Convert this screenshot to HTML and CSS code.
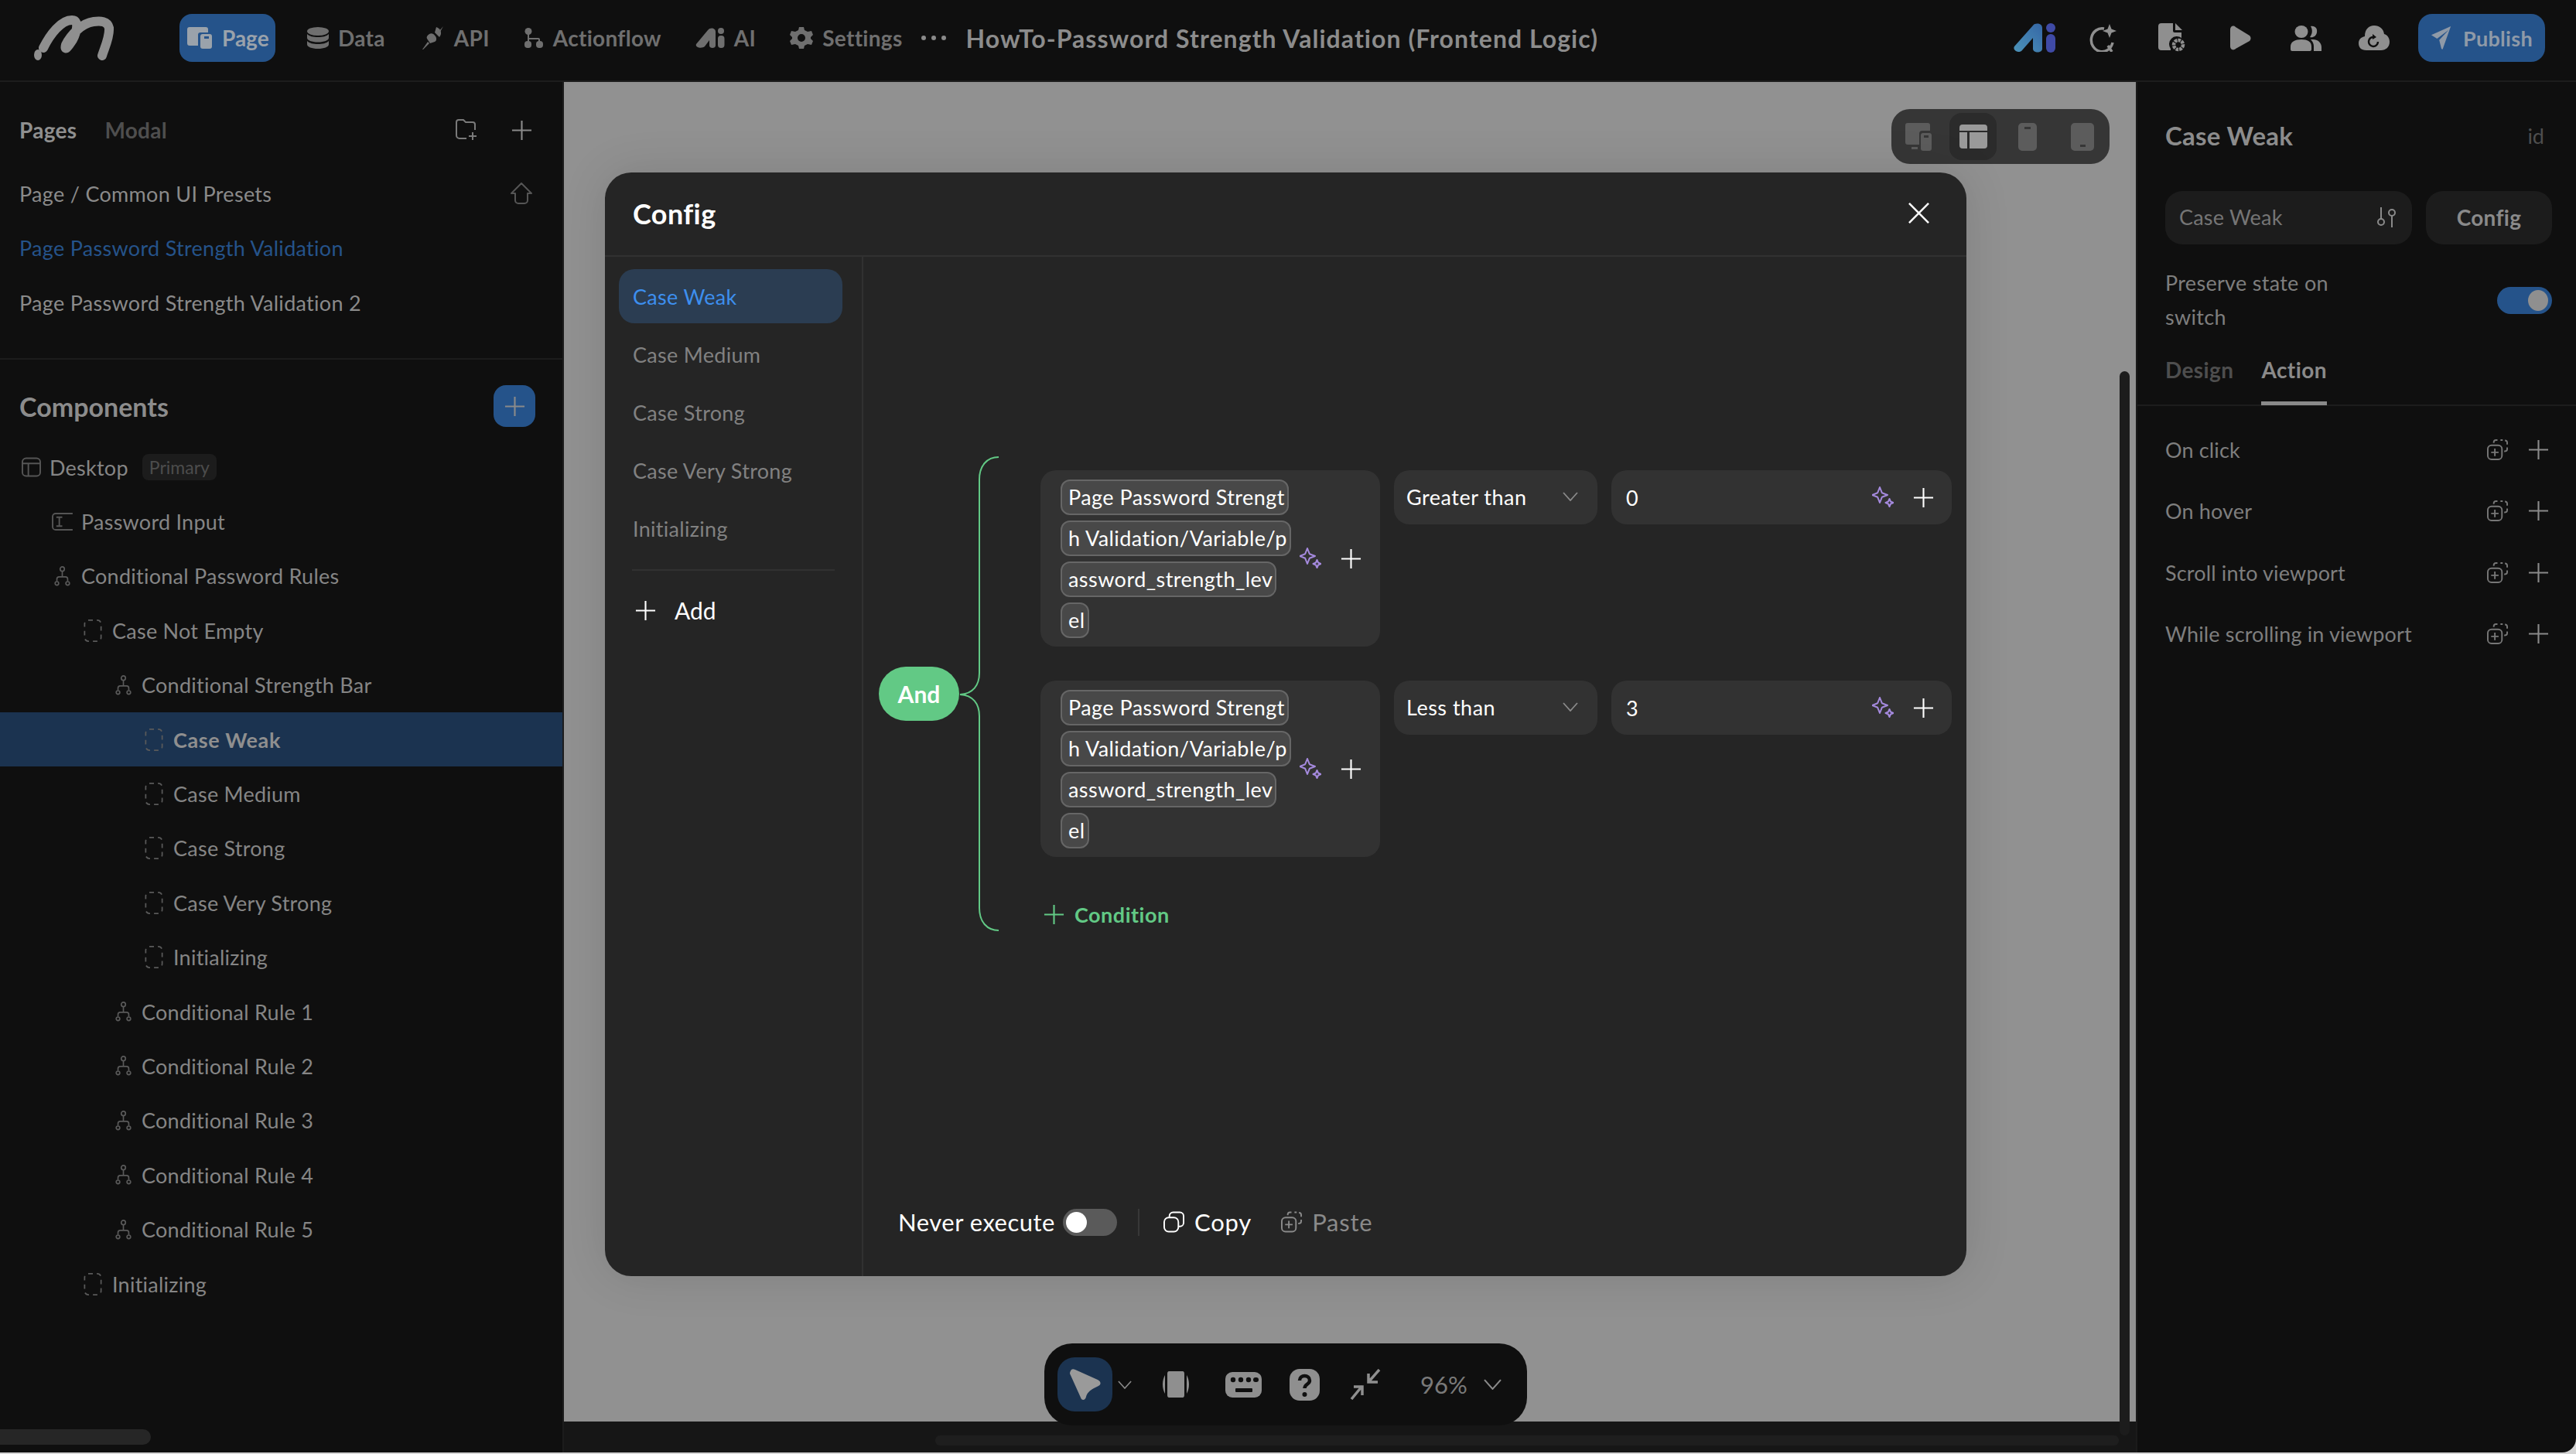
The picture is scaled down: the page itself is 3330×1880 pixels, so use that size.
FILE: index.html
```html
<!DOCTYPE html>
<html lang="en">
<head>
<meta charset="utf-8">
<title>HowTo-Password Strength Validation (Frontend Logic)</title>
<link rel="stylesheet" href="styles.css">
</head>
<body>
<svg class="sprite" xmlns="http://www.w3.org/2000/svg">
  <symbol id="plus" viewBox="0 0 28 28"><path d="M14 1v26M1 14h26" fill="none" stroke="currentColor" stroke-width="2.200"/></symbol>
  <symbol id="paste" viewBox="0 0 28 28"><g fill="none" stroke="currentColor" stroke-width="2"><path d="M9 5V4a3 3 0 0 1 3-3h2M18 1h3M24 1.500a3 3 0 0 1 3 3V7M27 11v2a3 3 0 0 1-3 3h-1"/><rect x="1" y="8" width="19" height="19" rx="5"/><path d="M10.500 12.500v10M5.500 17.500h10"/></g></symbol>
  <symbol id="dash" viewBox="0 0 24 30"><rect x="1" y="1" width="22" height="28" rx="5" fill="none" stroke="currentColor" stroke-width="1.800" stroke-dasharray="6 5.300"/></symbol>
  <symbol id="cond" viewBox="0 0 22 28"><g fill="none" stroke="currentColor" stroke-width="1.800"><circle cx="11" cy="4" r="3"/><circle cx="3.500" cy="24" r="2.500"/><circle cx="18.500" cy="24" r="2.500"/><path d="M11 7v8M3.500 21v-3a3 3 0 0 1 3-3h9a3 3 0 0 1 3 3v3"/></g></symbol>
  <symbol id="spark" viewBox="0 0 28 28"><g fill="none" stroke="#a58ade" stroke-width="2" stroke-linejoin="round"><path d="M10 1l2.800 7.200L20 11l-7.200 2.800L10 21l-2.800-7.200L0 11l7.200-2.800z"/><path d="M22.500 16l1.500 3.500 3.500 1.500-3.500 1.500-1.500 3.500-1.500-3.500-3.500-1.500 3.500-1.500z"/></g></symbol>
  <symbol id="chev" viewBox="0 0 20 12"><path d="M1 1l9 10 9-10" fill="none" stroke="currentColor" stroke-width="1.800"/></symbol>
</svg>

<div class="app">
  <header class="topbar">
    <svg class="logo" viewBox="0 0 108 58"><g fill="none" stroke="#8f8f8f" stroke-width="12" stroke-linecap="round"><path d="M13 42C22 24 36 6 50 6c12 0 4 22-2 30-4 6-8 10-6 2 6-12 20-28 36-30 9-1 18-1 20 8 1 12-6 26-9 36"/></g><ellipse cx="6" cy="51" rx="5" ry="7" fill="#8f8f8f"/></svg>
    <nav class="nav">
      <a class="nav-item nav-active"><svg viewBox="0 0 34 28" class="ni ni-g"><path d="M4 0h21a3 3 0 0 1 3 3v4H18a3 3 0 0 0-3 3v14H4a3 3 0 0 1-3-3V3a3 3 0 0 1 3-3z" fill="#9aa2ab"/><rect x="18" y="9" width="15" height="19" rx="3" fill="#9aa2ab"/><rect x="23" y="12" width="6" height="3" fill="#25538a"/></svg>Page</a>
      <a class="nav-item nav-data"><svg viewBox="0 0 28 28" class="ni ni-d"><g fill="#6f6f6f"><ellipse cx="14" cy="5.500" rx="14" ry="5.500"/><path d="M0 9c3 3 8 4 14 4s11-1 14-4v5c0 3-6 5.500-14 5.500S0 17 0 14z"/><path d="M0 18c3 3 8 4 14 4s11-1 14-4v4.500c0 3-6 5.500-14 5.500S0 25.500 0 22.500z"/></g></svg>Data</a>
      <a class="nav-item"><svg viewBox="0 0 30 30" class="ni ni-a"><g fill="#6f6f6f"><path d="M19 1c6 2 8 8 4 13l-6-6z"/><path d="M28 0l-7 8 2 1z"/><path d="M10 10c3-2 6 0 8 3s1 6-1 7l-6 2-4-6c-1-2 0-4 3-6z"/><path d="M1 30l7-10 2 2-8 8z"/></g></svg>API</a>
      <a class="nav-item"><svg viewBox="0 0 26 26" class="ni ni-f"><g fill="#6f6f6f"><circle cx="6" cy="4.500" r="4.500"/><rect x="1" y="17" width="9" height="9" rx="4"/><rect x="16" y="17" width="9" height="9" rx="4"/><path d="M5 8h2v5h12a2 2 0 0 1 2 2v3h-2v-3H7v3H5z"/></g></svg>Actionflow</a>
      <a class="nav-item"><svg viewBox="0 0 38 26" class="ni ni-i"><g fill="#6f6f6f"><path d="M1 21L16 3c3-4 10-3 10 2v18c0 4-8 4-8 0v-7l-6 8c-3 3-13 2-11-3z"/><circle cx="33" cy="4" r="4"/><rect x="29" y="10" width="8.500" height="16" rx="4"/></g></svg>AI</a>
      <a class="nav-item"><svg viewBox="0 0 30 28" class="ni ni-s"><path fill="#6f6f6f" fill-rule="evenodd" d="M12 0h6l1 4 4 2 5-1 2 5-3 3v2l3 3-2 5-5-1-4 2-1 4h-6l-1-4-4-2-5 1-2-5 3-3v-2L0 10l2-5 5 1 4-2zm3 9a5 5 0 1 0 0 10 5 5 0 0 0 0-10z"/></svg>Settings</a>
      <span class="dots"><i></i><i></i><i></i></span>
    </nav>
    <h1 class="doc-title">HowTo-Password Strength Validation (Frontend Logic)</h1>
    <div class="top-actions">
      <svg viewBox="0 0 55 38" class="ta ta-ai"><defs><linearGradient id="aig" x1="0" y1="1" x2="1" y2="0"><stop offset="0" stop-color="#4c93b8"/><stop offset="1" stop-color="#3567a6"/></linearGradient></defs><path d="M1 30L25 3c3-4 12-3 12 3v27c0 6-12 6-12 0V19L11 35c-4 5-13 0-10-5z" fill="url(#aig)"/><ellipse cx="48" cy="6" rx="6" ry="6" fill="#3f4aa6"/><rect x="42" y="14" width="12" height="24" rx="6" fill="#3f4aa6"/></svg>
      <svg viewBox="0 0 36 36" class="ta ta-s"><g fill="none" stroke="#8f8f8f" stroke-width="3.500"><path d="M20 6a14 15 0 1 0 11 18M25 28l5 8"/></g><path d="M27 0l2.500 6.500L36 9l-6.500 2.500L27 18l-2.500-6.500L18 9l6.500-2.500z" fill="#8f8f8f"/></svg>
      <svg viewBox="0 0 36 38" class="ta ta-f"><path d="M4 0h15v10a2 2 0 0 0 2 2h9v7a10 10 0 0 0-14 14v2H4a4 4 0 0 1-4-4V4a4 4 0 0 1 4-4z" fill="#8f8f8f"/><path d="M22 0l9 9h-9z" fill="#8f8f8f"/><circle cx="26" cy="28" r="6" fill="none" stroke="#8f8f8f" stroke-width="4.500" stroke-dasharray="3.500 1"/></svg>
      <svg viewBox="0 0 28 32" class="ta ta-p"><path d="M1 5c0-4 4-6 7-3l18 11c2 2 2 5 0 7L8 30c-3 3-7 1-7-3z" fill="#8f8f8f"/></svg>
      <svg viewBox="0 0 40 33" class="ta ta-u"><g fill="#8f8f8f"><ellipse cx="14" cy="8" rx="8.500" ry="8"/><path d="M0 27c0-6 6-9 14-9s13 3 13 9v4a2 2 0 0 1-2 2H2a2 2 0 0 1-2-2z"/><path d="M26 1c6-1 9 3 8 8s-5 7-9 6c3-4 4-9 1-14z"/><path d="M29 18c6 0 11 4 11 10v5h-10v-6c0-3-1-6-4-9z"/></g></svg>
      <svg viewBox="0 0 40 32" class="ta ta-c"><path d="M10 32C3 32 0 28 0 23s3-8 8-9C8 5 13 0 20 0s12 4 13 11c4 1 7 5 7 10 0 7-5 11-11 11z" fill="#8f8f8f"/><path d="M25 21a6 6 0 1 1-5-6" fill="none" stroke="#0f0f0f" stroke-width="2.500"/><path d="M18 11l5 4-5 3z" fill="#0f0f0f"/></svg>
      <a class="publish"><svg viewBox="0 0 30 32" class="pub-i"><path d="M28 0L1 12l8 5L25 5 12 19l3 12c1 1 2 1 2 0z" fill="#8f9aa8"/></svg>Publish</a>
    </div>
  </header>

  <main class="workspace">
    <aside class="left">
      <section class="pages">
        <div class="pages-head">
          <span class="tab-on">Pages</span><span class="tab-off">Modal</span>
          <svg viewBox="0 0 28 28" class="fold"><path d="M14 25H5a4 4 0 0 1-4-4V4a3 3 0 0 1 3-3h6l3 3h9a3 3 0 0 1 3 3v7" fill="none" stroke="currentColor" stroke-width="2"/><path d="M22 17v10M17 22h10" fill="none" stroke="currentColor" stroke-width="2"/></svg>
          <svg class="i-plus"><use href="#plus"/></svg>
        </div>
        <div class="page-row">Page / Common UI Presets<svg viewBox="0 0 28 28" class="home"><path d="M14 1L1 14h5v9a4 4 0 0 0 4 4h8a4 4 0 0 0 4-4v-9h5z" fill="none" stroke="#555" stroke-width="2" stroke-linejoin="round"/></svg></div>
        <div class="page-row page-current">Page Password Strength Validation</div>
        <div class="page-row">Page Password Strength Validation 2</div>
      </section>
      <div class="comp-head"><span>Components</span><a class="comp-add"><svg class="i-plus"><use href="#plus"/></svg></a></div>
      <ul class="tree">
        <li class="node d0"><svg viewBox="0 0 26 26" class="ic ic-w"><g fill="none" stroke="#555" stroke-width="2"><rect x="1" y="1" width="24" height="24" rx="5"/><path d="M1 8h24M9 8v17"/></g></svg>Desktop<span class="badge">Primary</span></li>
        <li class="node d1"><svg viewBox="0 0 28 24" class="ic ic-i"><g fill="none" stroke="#555" stroke-width="2"><path d="M28 1H5a4 4 0 0 0-4 4v14a4 4 0 0 0 4 4h23"/><path d="M6 6h8M6 18h8M10 6v12"/></g></svg>Password Input</li>
        <li class="node d1"><svg class="ic ic-c"><use href="#cond"/></svg>Conditional Password Rules</li>
        <li class="node d2"><svg class="ic ic-d"><use href="#dash"/></svg>Case Not Empty</li>
        <li class="node d3"><svg class="ic ic-c"><use href="#cond"/></svg>Conditional Strength Bar</li>
        <li class="node d4 node-sel"><svg class="ic ic-d"><use href="#dash"/></svg>Case Weak</li>
        <li class="node d4"><svg class="ic ic-d"><use href="#dash"/></svg>Case Medium</li>
        <li class="node d4"><svg class="ic ic-d"><use href="#dash"/></svg>Case Strong</li>
        <li class="node d4"><svg class="ic ic-d"><use href="#dash"/></svg>Case Very Strong</li>
        <li class="node d4"><svg class="ic ic-d"><use href="#dash"/></svg>Initializing</li>
        <li class="node d3"><svg class="ic ic-c"><use href="#cond"/></svg>Conditional Rule 1</li>
        <li class="node d3"><svg class="ic ic-c"><use href="#cond"/></svg>Conditional Rule 2</li>
        <li class="node d3"><svg class="ic ic-c"><use href="#cond"/></svg>Conditional Rule 3</li>
        <li class="node d3"><svg class="ic ic-c"><use href="#cond"/></svg>Conditional Rule 4</li>
        <li class="node d3"><svg class="ic ic-c"><use href="#cond"/></svg>Conditional Rule 5</li>
        <li class="node d2"><svg class="ic ic-d"><use href="#dash"/></svg>Initializing</li>
      </ul>
      <div class="left-scroll"></div>
    </aside>

    <section class="stage">
      <div class="canvas"></div>
      <div class="hscroll"><div class="hthumb"></div></div>
      <div class="vthumb"></div>

      <div class="devices">
        <svg viewBox="0 0 34 36" class="dv dv1"><path d="M3 0h26a3 3 0 0 1 3 3v7H22a4 4 0 0 0-4 4v14H3a3 3 0 0 1-3-3V3a3 3 0 0 1 3-3zM8 31h8v3H8z" fill="#5c5c5c"/><rect x="20" y="13" width="14" height="23" rx="3" fill="#5c5c5c"/><rect x="24" y="16" width="6" height="3" fill="#363636"/></svg>
        <div class="dv-on"><svg viewBox="0 0 36 31" class="dv2"><path d="M4 0h28a4 4 0 0 1 4 4v4H0V4a4 4 0 0 1 4-4zM0 10h10v21H4a4 4 0 0 1-4-4zM13 10h23v17a4 4 0 0 1-4 4H13z" fill="#9a9a9a"/></svg></div>
        <svg viewBox="0 0 24 36" class="dv dv3"><path d="M5 0h14a5 5 0 0 1 5 5v26a5 5 0 0 1-5 5H5a5 5 0 0 1-5-5V5a5 5 0 0 1 5-5zm3 5v3h8V5z" fill="#5c5c5c" fill-rule="evenodd"/></svg>
        <svg viewBox="0 0 30 36" class="dv dv4"><path d="M5 0h20a5 5 0 0 1 5 5v26a5 5 0 0 1-5 5H5a5 5 0 0 1-5-5V5a5 5 0 0 1 5-5zm7 28v3h7v-3z" fill="#5c5c5c" fill-rule="evenodd"/></svg>
      </div>

      <div class="modal">
        <div class="modal-head"><h2>Config</h2><svg viewBox="0 0 28 28" class="close"><path d="M1 1l26 26M27 1L1 27" fill="none" stroke="#fff" stroke-width="2.600"/></svg></div>
        <div class="modal-body">
          <div class="cases">
            <div class="case case-on">Case Weak</div>
            <div class="case">Case Medium</div>
            <div class="case">Case Strong</div>
            <div class="case">Case Very Strong</div>
            <div class="case">Initializing</div>
            <div class="case-rule"></div>
            <div class="case-add"><svg class="i-plus"><use href="#plus"/></svg>Add</div>
          </div>
          <div class="logic">
            <svg class="bracket" viewBox="0 0 52 614"><path d="M51 1C36 1 26 12 26 30v250c0 16-8 27-25 28 17 1 25 12 25 28v248c0 18 10 29 25 29" fill="none" stroke="#62c985" stroke-width="2"/></svg>
            <div class="and">And</div>
            <div class="cond-row">
              <div class="var-box">
                <div class="tags"><span class="tag">Page Password Strengt</span><span class="tag">h Validation/Variable/p</span><span class="tag">assword_strength_lev</span><span class="tag">el</span></div>
                <svg class="i-spark"><use href="#spark"/></svg><svg class="i-plus"><use href="#plus"/></svg>
              </div>
              <div class="select">Greater than<svg class="i-chev"><use href="#chev"/></svg></div>
              <div class="value"><span class="val">0</span><svg class="i-spark"><use href="#spark"/></svg><svg class="i-plus"><use href="#plus"/></svg></div>
            </div>
            <div class="cond-row cond-second">
              <div class="var-box">
                <div class="tags"><span class="tag">Page Password Strengt</span><span class="tag">h Validation/Variable/p</span><span class="tag">assword_strength_lev</span><span class="tag">el</span></div>
                <svg class="i-spark"><use href="#spark"/></svg><svg class="i-plus"><use href="#plus"/></svg>
              </div>
              <div class="select">Less than<svg class="i-chev"><use href="#chev"/></svg></div>
              <div class="value"><span class="val">3</span><svg class="i-spark"><use href="#spark"/></svg><svg class="i-plus"><use href="#plus"/></svg></div>
            </div>
            <div class="add-cond"><svg class="i-plus"><use href="#plus"/></svg>Condition</div>
            <div class="modal-foot">
              <span class="never">Never execute</span><span class="switch"><i></i></span><span class="foot-rule"></span>
              <span class="copy"><svg viewBox="0 0 28 28" class="fi"><g fill="none" stroke="#fff" stroke-width="2"><rect x="1" y="8" width="19" height="19" rx="6"/><path d="M8 8V6a5 5 0 0 1 5-5h9a5 5 0 0 1 5 5v9a5 5 0 0 1-5 5h-2"/></g></svg>Copy</span>
              <span class="paste"><svg class="fi"><use href="#paste"/></svg>Paste</span>
            </div>
          </div>
        </div>
      </div>

      <div class="tools">
        <div class="tool-on"><svg viewBox="0 0 40 40" class="cursor"><path d="M2 1c1-1 3-1 5 0l29 13c4 2 5 6 1 8l-6 3c-6 3-9 7-10 11-1 5-6 5-7 1L0 6c0-2 1-4 2-5z" fill="#9a9a9a"/></svg></div>
        <svg class="i-chev chev-a"><use href="#chev"/></svg>
        <svg viewBox="0 0 34 34" class="t t1"><path d="M8 0h18c1 0 2 1 2 3v28c0 2-1 3-2 3H8c-1 0-2-1-2-3V3c0-2 1-3 2-3zM3 5c-4 7-4 17 0 24zM31 5c4 7 4 17 0 24z" fill="#8f8f8f"/></svg>
        <svg viewBox="0 0 47 33" class="t t2"><rect width="47" height="33" rx="9" fill="#8f8f8f"/><g fill="#0f0f0f"><circle cx="10" cy="10" r="3.200"/><circle cx="20" cy="10" r="3.200"/><circle cx="30" cy="10" r="3.200"/><rect x="36" y="7" width="7" height="6" rx="3"/><rect x="13" y="21" width="22" height="5" rx="1"/></g></svg>
        <svg viewBox="0 0 39 41" class="t t3"><rect width="39" height="41" rx="13" fill="#8f8f8f"/><path d="M13 15c0-8 13-8 13 0 0 5-6.500 4.500-6.500 10" fill="none" stroke="#0f0f0f" stroke-width="4.500"/><circle cx="19.500" cy="33" r="3" fill="#0f0f0f"/></svg>
        <svg viewBox="0 0 40 40" class="t t4"><g fill="none" stroke="#8f8f8f" stroke-width="3.500"><path d="M38 1L24 17M24 6v11h12M2 39l14-17M5 23h11v11"/></g></svg>
        <span class="zoom">96%</span>
        <svg class="i-chev chev-b"><use href="#chev"/></svg>
      </div>
    </section>

    <aside class="right">
      <div class="r-title"><h2>Case Weak</h2><span>id</span></div>
      <div class="r-name">
        <div class="r-input">Case Weak<svg viewBox="0 0 26 26" class="tune"><g fill="none" stroke="currentColor" stroke-width="2"><path d="M6 0v15M20 11v15"/><circle cx="6" cy="19" r="4"/><circle cx="20" cy="7" r="4"/></g></svg></div>
        <div class="r-btn">Config</div>
      </div>
      <div class="r-preserve"><p>Preserve state on<br>switch</p><span class="r-switch"><i></i></span></div>
      <div class="r-tabs"><span class="r-tab">Design</span><span class="r-tab r-tab-on">Action</span></div>
      <ul class="r-events">
        <li>On click<svg class="i-paste"><use href="#paste"/></svg><svg class="i-plus"><use href="#plus"/></svg></li>
        <li>On hover<svg class="i-paste"><use href="#paste"/></svg><svg class="i-plus"><use href="#plus"/></svg></li>
        <li>Scroll into viewport<svg class="i-paste"><use href="#paste"/></svg><svg class="i-plus"><use href="#plus"/></svg></li>
        <li>While scrolling in viewport<svg class="i-paste"><use href="#paste"/></svg><svg class="i-plus"><use href="#plus"/></svg></li>
      </ul>
    </aside>
  </main>
</div>
</body>
</html>
```
FILE: styles.css
```css
* { box-sizing: border-box; }
html, body { margin: 0; padding: 0; }
body { width: 3330px; height: 1880px; background: #d4d4d4; font-family: "Lato", "Liberation Sans", sans-serif; font-size: 27px; color: #8a8a8a; overflow: hidden; }
h1, h2, p, ul { margin: 0; padding: 0; list-style: none; font-weight: 700; }
p { font-weight: 400; }
.sprite { position: absolute; width: 0; height: 0; }
svg { display: block; flex: none; }
.app { width: 3330px; height: 1878px; display: flex; flex-direction: column; background: #0f0f0f; border-bottom-right-radius: 18px; overflow: hidden; }

/* top bar */
.topbar { height: 106px; flex: none; display: flex; align-items: center; border-bottom: 2px solid #1d1d1d; padding-left: 43px; padding-bottom: 6px; padding-right: 40px; }
.logo { width: 108px; height: 58px; margin-right: 81px; }
.nav { display: flex; align-items: center; }
.nav-item { display: flex; align-items: center; gap: 12px; margin-right: 24px; color: #6f6f6f; font-weight: 700; font-size: 28px; letter-spacing: .3px; height: 62px; margin-left: 20px; }
.nav-data { margin-right: 27px; }
.nav-active { background: #25538a; color: #9aa2ab; width: 124px; border-radius: 16px; padding-left: 9px; margin-left: 0; margin-right: 21px; letter-spacing: 0; }
.ni { height: 28px; }
.ni-g { width: 34px; }
.ni-d { width: 28px; }
.ni-a { width: 30px; height: 30px; }
.ni-f { width: 26px; height: 26px; }
.ni-i { width: 38px; height: 26px; }
.ni-s { width: 30px; }
.dots { display: flex; gap: 7px; margin-left: 0; }
.dots i { width: 6px; height: 6px; border-radius: 50%; background: #8a8a8a; }
.doc-title { margin-left: 26px; font-size: 32px; color: #8c8c8c; white-space: nowrap; letter-spacing: 1.050px; }
.top-actions { margin-left: auto; display: flex; align-items: center; }
.ta-ai { width: 55px; height: 38px; margin-right: 42px; }
.ta-s { width: 36px; height: 36px; margin-right: 54px; }
.ta-f { width: 36px; height: 38px; margin-right: 56px; }
.ta-p { width: 28px; height: 32px; margin-right: 51px; }
.ta-u { width: 40px; height: 33px; margin-right: 48px; }
.ta-c { width: 40px; height: 32px; margin-right: 37px; }
.publish { width: 164px; height: 62px; border-radius: 18px; background: #25538a; color: #8f9aa8; display: flex; align-items: center; gap: 14px; padding-left: 16px; font-weight: 700; font-size: 27px; letter-spacing: .3px; }
.pub-i { width: 28px; height: 30px; }

/* workspace */
.workspace { flex: 1; display: flex; min-height: 0; }

/* left */
.left { width: 729px; flex: none; border-right: 2px solid #1c1c1c; display: flex; flex-direction: column; }
.pages { height: 359px; flex: none; border-bottom: 2px solid #1c1c1c; }
.pages-head { display: flex; align-items: center; height: 60px; margin-top: 32px; padding: 0 39px 0 25px; font-size: 28px; letter-spacing: .3px; }
.tab-on { color: #8f8f8f; font-weight: 700; }
.tab-off { color: #4e4e4e; font-weight: 700; margin-left: 36px; }
.fold { width: 28px; height: 28px; margin-left: auto; color: #7a7a7a; margin-right: 44px; }
.i-plus { width: 27px; height: 27px; color: #8a8a8a; }
.page-row { display: flex; align-items: center; justify-content: space-between; height: 70.500px; padding: 0 39px 0 25px; letter-spacing: .3px; white-space: nowrap; }
.pages-head + .page-row { margin-top: 17px; }
.page-current { color: #25538a; }
.home { width: 28px; height: 28px; }
.comp-head { display: flex; align-items: center; justify-content: space-between; height: 54px; margin-top: 33px; padding: 0 35px 0 25px; font-size: 34px; font-weight: 700; color: #8c8c8c; }
.comp-add { width: 54px; height: 54px; border-radius: 16px; background: #25538a; display: flex; align-items: center; justify-content: center; }
.tree { margin-top: 17px; font-weight: 400; }
.node { display: flex; align-items: center; height: 70.400px; white-space: nowrap; color: #858585; letter-spacing: .25px; }
.d0 { padding-left: 28px; }
.d1 { padding-left: 67px; }
.d2 { padding-left: 108px; }
.d3 { padding-left: 149px; }
.d4 { padding-left: 187px; }
.ic { color: #5a5a5a; margin-right: 13px; }
.ic-w { width: 25px; height: 26px; margin-right: 11px; }
.ic-i { width: 27px; height: 23px; margin-right: 11px; }
.ic-c { width: 21px; height: 26px; margin-right: 13px; margin-left: 0; }
.d1 .ic-c { margin-left: 3px; margin-right: 14px; }
.ic-d { width: 24px; height: 29px; margin-right: 13px; }
.node-sel { background: #1b3350; font-weight: 700; color: #8f8f8f; letter-spacing: .6px; }
.badge { margin-left: 18px; height: 34px; padding: 0 9px; border-radius: 8px; background: #1c1c1c; color: #4c4c4c; font-size: 23px; line-height: 34px; letter-spacing: 0; }
.left-scroll { margin-top: auto; margin-bottom: 10px; width: 195px; height: 20px; background: #262626; border-radius: 0 10px 10px 0; }

/* stage */
.stage { width: 2034px; flex: none; position: relative; display: flex; flex-direction: column; border-right: 2px solid #1a1a1a; }
.canvas { flex: 1; background: #919191; }
.hscroll { height: 40px; flex: none; background: #161616; padding: 18px 22px 0 480px; }
.hthumb { height: 13px; background: #1e1e1e; border-radius: 6px; }
.vthumb { position: absolute; left: 2011px; top: 374px; width: 13px; height: 1376px; background: #1c1c1c; border-radius: 7px; }
.devices { position: absolute; left: 1716px; top: 35px; width: 282px; height: 71px; background: #363636; border-radius: 24px; display: flex; align-items: center; padding-left: 18px; }
.dv { height: 36px; }
.dv1 { width: 34px; }
.dv-on { width: 61px; height: 61px; margin-left: 23px; background: #2b2b2b; border-radius: 16px; display: flex; align-items: center; justify-content: center; }
.dv2 { width: 36px; height: 31px; }
.dv3 { width: 24px; margin-left: 28px; }
.dv4 { width: 30px; margin-left: 44px; }

/* modal */
.modal { position: absolute; left: 53px; top: 117px; width: 1760px; height: 1427px; background: #252525; border-radius: 34px; display: flex; flex-direction: column; box-shadow: 0 0 60px rgba(0,0,0,.12); color: #fff; }
.modal-head { height: 109px; flex: none; display: flex; align-items: center; justify-content: space-between; padding: 0 48px 2px 36px; border-bottom: 2px solid #313131; }
.modal-head h2 { font-size: 36px; color: #fff; letter-spacing: .4px; }
.close { width: 27px; height: 27px; }
.modal-body { flex: 1; display: flex; min-height: 0; }
.cases { width: 334px; flex: none; border-right: 2px solid #313131; padding: 16px 25px 0 18px; }
.case { height: 70px; margin-bottom: 5px; padding-left: 18px; display: flex; align-items: center; color: #818181; font-size: 27px; letter-spacing: .3px; }
.case-on { background: #2b3d52; border-radius: 20px; color: #3d8fef; }
.case-rule { height: 2px; background: #313131; margin: 18px 10px 0 17px; }
.case-add { display: flex; align-items: center; gap: 24px; height: 70px; margin-top: 16px; padding-left: 21px; font-size: 30px; color: #fff; }
.case-add .i-plus { color: #fff; }
.logic { flex: 1; position: relative; padding: 276px 0 0 229px; display: flex; flex-direction: column; }
.bracket { position: absolute; left: 124px; top: 258px; width: 52px; height: 614px; }
.and { position: absolute; left: 20px; top: 530px; width: 104px; height: 70px; border-radius: 35px; background: #62c985; color: #fff; font-weight: 700; font-size: 30px; display: flex; align-items: center; justify-content: center; }
.cond-row { display: flex; align-items: flex-start; gap: 18px; }
.cond-second { margin-top: 44px; }
.var-box { width: 439px; height: 228px; background: #323232; border-radius: 20px; display: flex; align-items: center; padding-left: 26px; }
.tags { width: 296px; display: flex; flex-direction: column; align-items: flex-start; gap: 7px; }
.tag { height: 46px; padding: 0 3px 0 8px; background: #484848; border: 2px solid #666; border-radius: 12px; color: #fff; font-size: 27px; line-height: 42px; letter-spacing: .45px; white-space: nowrap; overflow: hidden; }
.var-box .i-spark { margin-left: 13px; }
.i-spark { width: 28px; height: 28px; }
.var-box .i-plus, .value .i-plus { color: #fff; }
.var-box .i-plus { margin-left: 25px; }
.select { width: 263px; height: 70px; background: #323232; border-radius: 20px; display: flex; align-items: center; justify-content: space-between; padding: 0 25px 2px 16px; color: #fff; letter-spacing: .5px; }
.i-chev { width: 20px; height: 12px; color: #8a8a8a; }
.value { width: 440px; height: 70px; background: #323232; border-radius: 20px; display: flex; align-items: center; padding: 0 23px 0 19px; color: #fff; }
.val { flex: 1; }
.value .i-plus { margin-left: 25px; }
.add-cond { display: flex; align-items: center; gap: 13px; height: 60px; margin-top: 44px; padding-left: 4px; color: #62c985; font-weight: 700; font-size: 27px; letter-spacing: .5px; }
.add-cond .i-plus { color: #62c985; }
.modal-foot { margin-top: auto; margin-bottom: 35px; margin-left: -184px; height: 70px; display: flex; align-items: center; font-size: 31px; letter-spacing: .5px; }
.never { color: #fff; }
.switch { margin-left: 10px; width: 70px; height: 35px; border-radius: 18px; background: #5a5a5a; padding: 4px; }
.switch i { display: block; width: 27px; height: 27px; border-radius: 50%; background: #fff; }
.foot-rule { width: 2px; height: 35px; background: #383838; margin: 0 31px 0 27px; }
.copy, .paste { display: flex; align-items: center; gap: 13px; }
.copy { letter-spacing: .8px; }
.paste { margin-left: 38px; color: #8a8a8a; letter-spacing: .8px; }
.fi { width: 27px; height: 28px; color: #8a8a8a; }

/* bottom tool bar */
.tools { position: absolute; left: 621px; top: 1631px; width: 624px; height: 106px; background: #0f0f0f; border-radius: 36px; display: flex; align-items: center; padding-left: 17px; }
.tool-on { width: 71px; height: 70px; background: #1b3350; border-radius: 22px; display: flex; align-items: center; justify-content: center; }
.cursor { width: 40px; height: 40px; }
.chev-a { margin-left: 7px; width: 18px; height: 11px; }
.t1 { width: 34px; height: 34px; margin-left: 40px; }
.t2 { width: 47px; height: 33px; margin-left: 47px; }
.t3 { width: 39px; height: 41px; margin-left: 36px; }
.t4 { width: 40px; height: 40px; margin-left: 39px; }
.zoom { margin-left: 51px; font-size: 31px; color: #7a7a7a; }
.chev-b { margin-left: 19px; width: 27px; height: 14px; }

/* right */
.right { flex: 1; padding: 0 31px 0 36px; min-width: 0; }
.r-title { display: flex; align-items: center; justify-content: space-between; height: 60px; margin-top: 39px; padding-right: 10px; }
.r-title h2 { font-size: 33px; color: #8c8c8c; letter-spacing: .2px; }
.r-title span { color: #4e4e4e; font-size: 27px; }
.r-name { display: flex; gap: 18px; margin-top: 42px; }
.r-input { width: 319px; height: 69px; background: #1c1c1c; border-radius: 22px; display: flex; align-items: center; justify-content: space-between; padding: 0 20px 2px 18px; color: #757575; letter-spacing: .2px; }
.tune { width: 26px; height: 26px; color: #8a8a8a; }
.r-btn { flex: 1; height: 69px; background: #1c1c1c; border-radius: 22px; display: flex; align-items: center; justify-content: center; color: #8a8a8a; font-weight: 700; font-size: 28px; letter-spacing: .3px; padding-bottom: 2px; }
.r-preserve { display: flex; align-items: center; justify-content: space-between; margin-top: 28px; }
.r-preserve p { line-height: 44px; color: #7e7e7e; letter-spacing: .3px; }
.r-switch { width: 71px; height: 35px; border-radius: 18px; background: #25538a; padding: 4px 5px 4px 40px; }
.r-switch i { display: block; width: 26px; height: 27px; border-radius: 50%; background: #8f8f8f; }
.r-tabs { display: flex; gap: 36px; margin: 0 -31px 0 -36px; padding-left: 36px; border-bottom: 2px solid #1c1c1c; height: 93px; }
.r-tab { height: 92px; padding-top: 30px; border-bottom: 5px solid transparent; font-weight: 700; color: #4e4e4e; line-height: 32px; font-size: 28px; letter-spacing: .4px; }
.r-tab-on { color: #8a8a8a; border-bottom-color: #8a8a8a; }
.r-events { margin-top: 17px; }
.r-events li { display: flex; align-items: center; height: 79.300px; font-weight: 400; color: #7e7e7e; white-space: nowrap; padding-right: 4px; letter-spacing: .15px; }
.i-paste { width: 27px; height: 27px; margin-left: auto; color: #777; }
.r-events .i-plus { margin-left: 26px; }
```
